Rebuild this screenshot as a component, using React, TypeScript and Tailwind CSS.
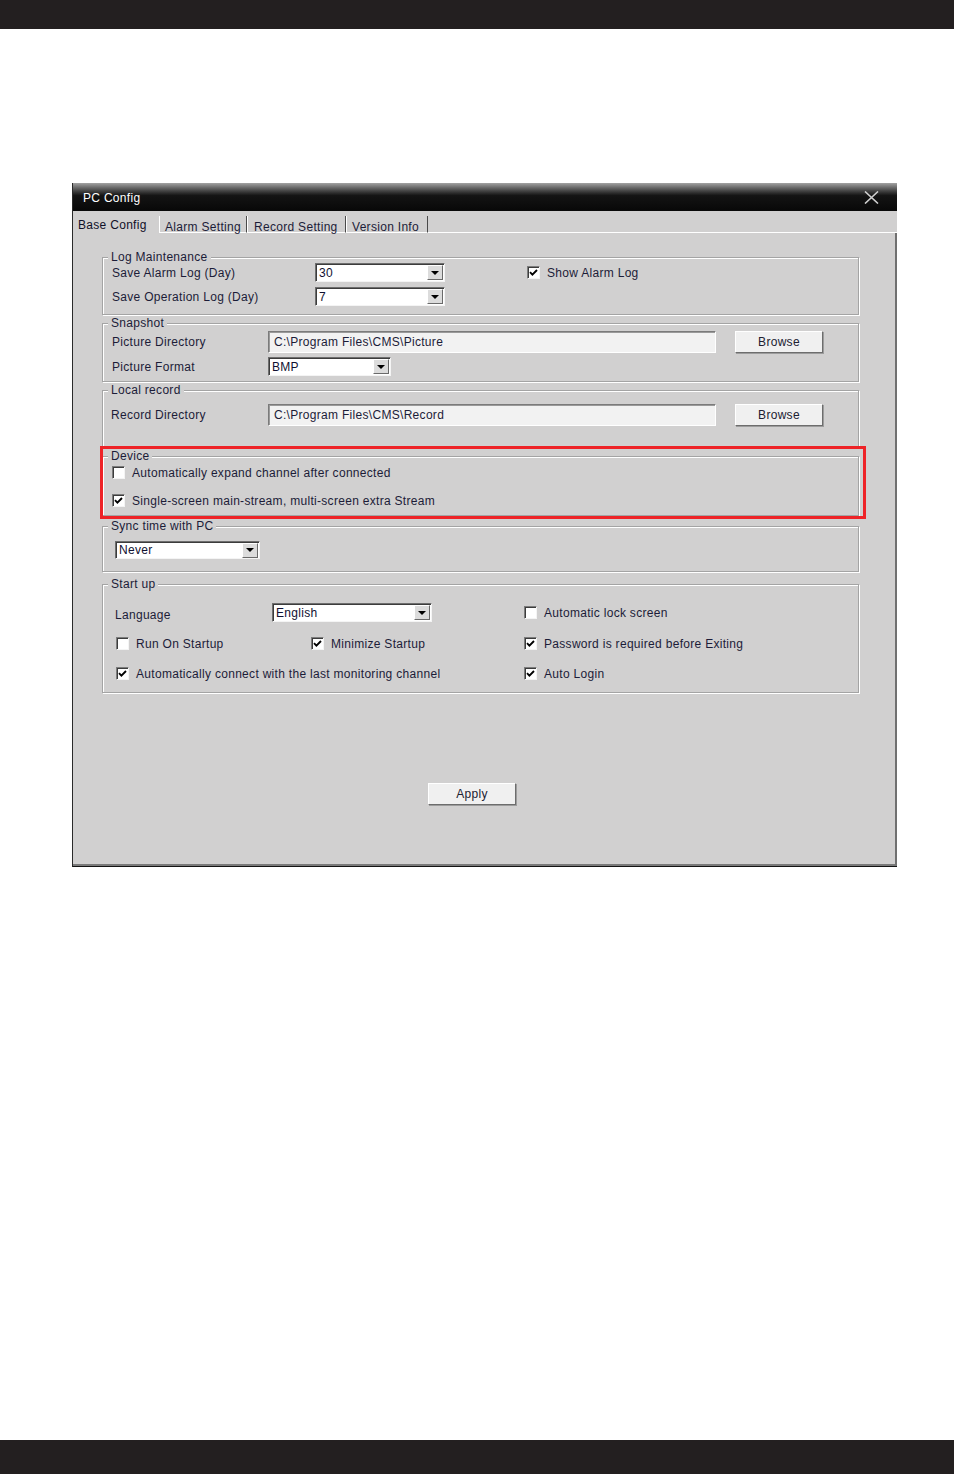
import React from 'react';

const Check = ({ checked }: { checked?: boolean }) => (
  <span className="inline-flex h-[13px] w-[13px] shrink-0 items-center justify-center border border-t-[#7c7c7c] border-l-[#7c7c7c] border-r-[#f4f4f4] border-b-[#f4f4f4] bg-white shadow-[inset_1px_1px_0_#3c3c3c]">
    {checked && (
      <svg width="9" height="9" viewBox="0 0 9 9">
        <path d="M1 4.2 L3.4 6.6 L8 2" fill="none" stroke="#000" strokeWidth="1.9" />
      </svg>
    )}
  </span>
);

const CheckRow = ({ label, checked, className = '' }: { label: string; checked?: boolean; className?: string }) => (
  <div className={`flex h-[13px] items-center gap-[7px] ${className}`}>
    <Check checked={checked} />
    <span className="whitespace-nowrap">{label}</span>
  </div>
);

const Combo = ({ value, className = '' }: { value: string; className?: string }) => (
  <div className={`flex items-center border border-t-[#6e6e6e] border-l-[#6e6e6e] border-r-[#f4f4f4] border-b-[#f4f4f4] bg-white shadow-[inset_1px_1px_0_#3c3c3c] ${className}`}>
    <span className="flex-1 pl-[3px] text-[#101030]">{value}</span>
    <span className="mr-[1px] flex h-[15px] w-[16px] items-center justify-center border border-t-white border-l-white border-r-[#6a6a6a] border-b-[#6a6a6a] bg-[#dcdcdc]">
      <svg width="8" height="4" viewBox="0 0 8 4">
        <path d="M0 0H8L4 4Z" fill="#000" />
      </svg>
    </span>
  </div>
);

const PathInput = ({ value }: { value: string }) => (
  <div className="flex h-[22px] w-[448px] items-center border border-t-[#7b7b7b] border-l-[#7b7b7b] border-r-white border-b-white bg-[#f2f2f2] pl-[5px] shadow-[inset_1px_1px_0_#9a9a9a]">
    {value}
  </div>
);

const Button = ({ label, className = '' }: { label: string; className?: string }) => (
  <div className={`flex h-[22px] w-[88px] items-center justify-center border border-t-white border-l-white border-r-[#6d6d6d] border-b-[#6d6d6d] bg-[#f0f0f0] text-[#202030] shadow-[1px_1px_0_#9c9c9c] ${className}`}>
    {label}
  </div>
);

const Group = ({ title, className = '', children }: { title: string; className?: string; children?: React.ReactNode }) => (
  <div className={`border border-[#a4a4a4] shadow-[1px_1px_0_#fff,inset_1px_1px_0_#fff] ${className}`}>
    <div className="-mt-[7px] ml-[5px] w-fit bg-[#d1d0d0] px-[3px] leading-[13px]">{title}</div>
    {children}
  </div>
);

export default function App() {
  return (
    <div className="flex min-h-screen flex-col bg-white font-['Liberation_Sans',Tahoma,sans-serif] text-[12px] tracking-[0.3px] text-[#1c1c38]">
      <div className="h-[29px] bg-[#231f20]" />

      <div className="ml-[72px] mt-[154px] w-[825px] border-l border-b border-l-[#2a2a2a] border-b-[#141414] bg-[#d1d0d0]">
        {/* title bar */}
        <div className="flex h-[28px] items-center justify-between bg-linear-to-b from-[#a3a3a3] via-[#141414] via-[45%] to-[#080808] pl-[10px] pr-[18px] pt-[1px] text-white">
          <span>PC Config</span>
          <svg width="15" height="13" viewBox="0 0 15 13">
            <path d="M1 0.5 L14 12.5 M14 0.5 L1 12.5" stroke="#cfcfcf" strokeWidth="1.6" />
          </svg>
        </div>

        {/* tabs */}
        <div className="flex h-[22px] items-end">
          <div className="h-full w-[86px] pl-[5px] pt-[5px] text-[#101028]">Base Config</div>
          <div className="h-[17px] w-[88px] border-l border-r border-b border-l-white border-r-[#4a4a4a] border-b-white pl-[5px] pt-[2px]">Alarm Setting</div>
          <div className="h-[17px] w-[99px] border-l border-r border-b border-l-white border-r-[#4a4a4a] border-b-white pl-[6px] pt-[2px]">Record Setting</div>
          <div className="h-[17px] w-[82px] border-l border-r border-b border-l-white border-r-[#4a4a4a] border-b-white pl-[5px] pt-[2px]">Version Info</div>
          <div className="h-full flex-1 border-b border-white" />
        </div>

        {/* panel */}
        <div className="flex h-[633px] flex-col border-r-2 border-b-2 border-r-[#707070] border-b-[#7a7a7a] pl-[29px] pt-[24px]">
          <Group title="Log Maintenance" className="h-[58px] w-[757px]">
            <div className="-mt-px flex h-[19px] items-center pl-[9px]">
              <span className="w-[203px]">Save Alarm Log (Day)</span>
              <Combo value="30" className="h-[19px] w-[130px]" />
              <CheckRow label="Show Alarm Log" checked className="ml-[82px]" />
            </div>
            <div className="mt-[5px] flex h-[19px] items-center pl-[9px]">
              <span className="w-[203px]">Save Operation Log (Day)</span>
              <Combo value="7" className="h-[19px] w-[130px]" />
            </div>
          </Group>

          <Group title="Snapshot" className="mt-[8px] h-[59px] w-[757px]">
            <div className="mt-[1px] flex items-center pl-[9px]">
              <span className="w-[156px]">Picture Directory</span>
              <PathInput value="C:\Program Files\CMS\Picture" />
              <Button label="Browse" className="ml-[19px]" />
            </div>
            <div className="mt-[4px] flex items-center pl-[9px]">
              <span className="w-[156px]">Picture Format</span>
              <Combo value="BMP" className="h-[19px] w-[123px]" />
            </div>
          </Group>

          <Group title="Local record" className="mt-[8px] h-[58px] w-[757px]">
            <div className="mt-[7px] flex items-center pl-[8px]">
              <span className="w-[157px]">Record Directory</span>
              <PathInput value="C:\Program Files\CMS\Record" />
              <Button label="Browse" className="ml-[19px]" />
            </div>
          </Group>

          <div className="relative mt-[8px]">
            <Group title="Device" className="h-[60px] w-[757px]">
              <CheckRow label="Automatically expand channel after connected" className="ml-[9px] mt-[3px]" />
              <CheckRow label="Single-screen main-stream, multi-screen extra Stream" checked className="ml-[9px] mt-[15px]" />
            </Group>
            <div className="pointer-events-none absolute -left-[2px] -top-[10px] h-[73px] w-[766px] border-[3px] border-[#ee2327]" />
          </div>

          <Group title="Sync time with PC" className="mt-[10px] h-[46px] w-[757px]">
            <div className="mt-[8px] pl-[12px]">
              <Combo value="Never" className="h-[18px] w-[145px]" />
            </div>
          </Group>

          <Group title="Start up" className="mt-[12px] h-[109px] w-[757px]">
            <div className="mt-[10px] flex items-center pl-[12px]">
              <span className="mt-[5px] w-[157px]">Language</span>
              <Combo value="English" className="h-[19px] w-[160px]" />
              <CheckRow label="Automatic lock screen" className="ml-[92px]" />
            </div>
            <div className="mt-[13px] flex items-center pl-[13px]">
              <CheckRow label="Run On Startup" className="w-[195px]" />
              <CheckRow label="Minimize Startup" checked className="w-[213px]" />
              <CheckRow label="Password is required before Exiting" checked />
            </div>
            <div className="mt-[17px] flex items-center pl-[13px]">
              <CheckRow label="Automatically connect with the last monitoring channel" checked className="w-[408px]" />
              <CheckRow label="Auto Login" checked />
            </div>
          </Group>

          <Button label="Apply" className="ml-[326px] mt-[90px]" />
        </div>
      </div>

      <div className="mt-auto h-[34px] bg-[#231f20]" />
    </div>
  );
}
